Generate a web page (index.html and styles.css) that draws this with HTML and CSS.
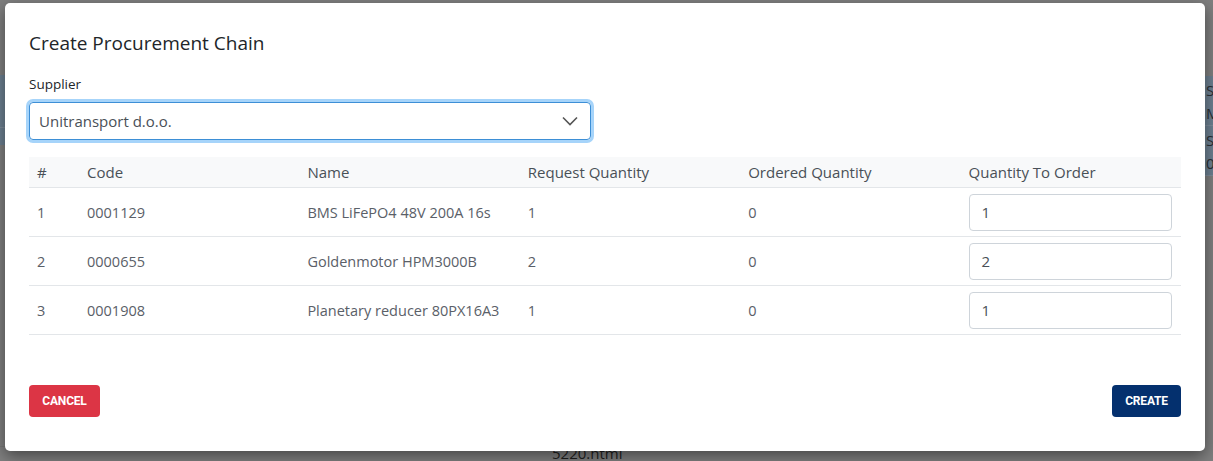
FILE: index.html
```html
<!DOCTYPE html>
<html>
<head>
<meta charset="utf-8">
<link rel="stylesheet" href="styles.css">
</head>
<body>
<div class="page">
  <div class="page-main">
    <div class="page-top"></div>
    <div class="page-band"><div class="band-line"></div></div>
    <div class="page-mid"></div>
    <div class="page-foot"><span class="foot-text">5220.html</span></div>
  </div>
  <div class="page-side">
    <div class="side-row">S<br>M</div>
    <div class="side-row">S<br>0</div>
  </div>
</div>
<div class="modal">
  <h2 class="modal-title">Create Procurement Chain</h2>
  <label class="field-label">Supplier</label>
  <div class="select">
    <span>Unitransport d.o.o.</span>
    <svg class="chev" width="16" height="10" viewBox="0 0 16 10"><path d="M1 1.5 L8 8.5 L15 1.5" fill="none" stroke="#555" stroke-width="1.6"/></svg>
  </div>
  <table class="grid">
    <thead>
      <tr><th class="c-num">#</th><th>Code</th><th>Name</th><th>Request Quantity</th><th>Ordered Quantity</th><th>Quantity To Order</th></tr>
    </thead>
    <tbody>
      <tr><td>1</td><td>0001129</td><td>BMS LiFePO4 48V 200A 16s</td><td>1</td><td>0</td><td><div class="qty">1</div></td></tr>
      <tr><td>2</td><td>0000655</td><td>Goldenmotor HPM3000B</td><td>2</td><td>0</td><td><div class="qty">2</div></td></tr>
      <tr><td>3</td><td>0001908</td><td>Planetary reducer 80PX16A3</td><td>1</td><td>0</td><td><div class="qty">1</div></td></tr>
    </tbody>
  </table>
  <div class="actions">
    <button class="btn btn-cancel">CANCEL</button>
    <button class="btn btn-create">CREATE</button>
  </div>
</div>
</body>
</html>
```
FILE: styles.css
```css
html, body { margin: 0; padding: 0; }
body {
  width: 1213px;
  height: 461px;
  overflow: hidden;
  background: #7f7f7f;
  font-family: "Open Sans", "Noto Sans", sans-serif;
  position: relative;
}
.page { display: flex; height: 461px; }
.page-main { flex: 1; display: flex; flex-direction: column; }
.page-top { height: 75px; }
.page-band {
  height: 70px;
  background: #6c7f90;
  display: flex;
  flex-direction: column;
  justify-content: flex-end;
}
.band-line { height: 17px; border-top: 1px solid #7d8c9a; }
.page-mid { flex: 1; border-bottom: 1px solid #767676; }
.page-foot { height: 14px; padding-left: 552px; overflow: visible; }
.foot-text {
  display: block;
  margin-top: -3px;
  font-size: 15px;
  line-height: 18px;
  color: #1f1f1f;
}
.page-side {
  width: 40px;
  margin-top: 76px;
  align-self: flex-start;
  background: #6c7f90;
}
.side-row {
  height: 50px;
  box-sizing: border-box;
  border-bottom: 1px solid #7d8c9a;
  padding: 3px 0 0 33px;
  font-size: 15px;
  line-height: 23px;
  color: #2a2f35;
}
.modal {
  position: absolute;
  left: 5px;
  top: 3px;
  width: 1200px;
  height: 448px;
  box-sizing: border-box;
  background: #fff;
  border-radius: 5px;
  box-shadow: 0 5px 15px rgba(0,0,0,.45);
  padding: 23px 24px 0 24px;
  display: flex;
  flex-direction: column;
}
.modal-title {
  margin: 0;
  font-family: "Open Sans", sans-serif;
  font-weight: 400;
  font-size: 19px;
  line-height: 34px;
  color: #212529;
}
.field-label {
  margin-top: 15px;
  font-size: 13.5px;
  line-height: 18px;
  color: #212529;
}
.select {
  margin-top: 9px;
  width: 562px;
  height: 38px;
  box-sizing: border-box;
  border: 1px solid #3d8fd6;
  border-radius: 4px;
  box-shadow: 0 0 0 3px #a6d4fa;
  display: flex;
  align-items: center;
  justify-content: space-between;
  padding: 0 12px 0 9px;
  font-size: 15px;
  color: #495057;
}
.chev { display: block; }
.grid {
  margin-top: 17px;
  width: 1152px;
  border-collapse: collapse;
  table-layout: fixed;
}
.grid th {
  background: #f8f9fa;
  text-align: left;
  font-weight: 400;
  font-size: 15px;
  color: #495057;
  height: 30px;
  padding: 0 8px;
  border-bottom: 1px solid #e3e6e9;
}
.grid th.c-num { width: 34px; }
.grid td {
  height: 48px;
  padding: 0 8px;
  font-size: 14.5px;
  color: #5a6068;
  border-bottom: 1px solid #e3e6e9;
}
.qty {
  width: 203px;
  height: 37px;
  box-sizing: border-box;
  border: 1px solid #ced4da;
  border-radius: 4px;
  display: flex;
  align-items: center;
  padding-left: 12px;
  font-size: 15px;
  color: #495057;
}
.actions {
  margin-top: 50px;
  width: 1152px;
  display: flex;
  justify-content: space-between;
}
.btn {
  height: 32px;
  border: none;
  border-radius: 4px;
  color: #fff;
  font-family: Roboto, sans-serif;
  font-weight: 700;
  font-size: 12px;
  padding: 0 12px;
  letter-spacing: -0.2px;
}
.btn-cancel { background: #dc3545; width: 71px; }
.btn-create { background: #04306e; width: 69px; }
```
